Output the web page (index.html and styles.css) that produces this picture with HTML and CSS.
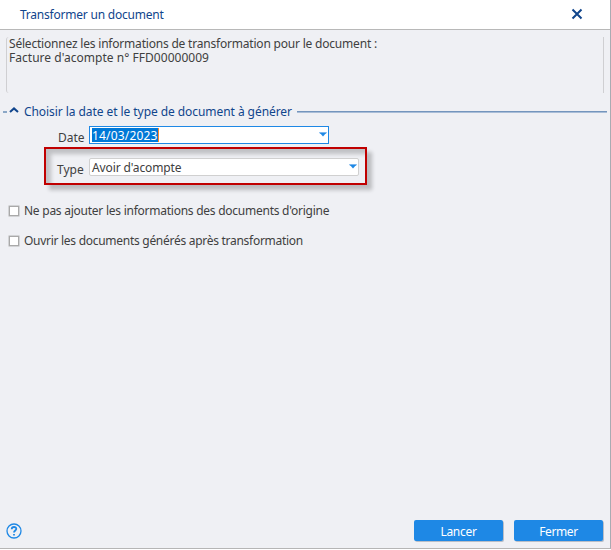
FILE: index.html
```html
<!DOCTYPE html>
<html lang="fr">
<head>
<meta charset="utf-8">
<title>Transformer un document</title>
<link rel="stylesheet" href="styles.css">
</head>
<body>
<div class="window">
  <header class="titlebar">
    <span class="title">Transformer un document</span>
    <svg class="close" width="12" height="12" viewBox="0 0 12 12"><path d="M1.5 1.5l9 9M10.5 1.5l-9 9"/></svg>
  </header>
  <main class="content">
    <div class="intro"><span class="intro-a">Sélectionnez les informations de transformation pour le document :</span><span class="intro-b">Facture d'acompte n° FFD00000009</span></div>
    <div class="section">
      <i class="stub"></i>
      <svg class="chevron" width="10" height="6" viewBox="0 0 10 6"><path d="M1 5l4-3.6L9 5"/></svg>
      <span class="section-title">Choisir la date et le type de document à générer</span>
      <i class="rule"></i>
    </div>
    <div class="row date-row">
      <label>Date</label>
      <div class="field focused"><span class="selected">14/03/2023</span><svg class="arrow" width="8" height="5" viewBox="0 0 8 5"><path class="top" d="M0 0h8L7 2H1z"/><path d="M1 1h6L4 4.5z"/></svg></div>
    </div>
    <div class="row highlight">
      <label>Type</label>
      <div class="field combo"><span class="value">Avoir d'acompte</span><svg class="arrow" width="8" height="5" viewBox="0 0 8 5"><path class="top" d="M0 0h8L7 2H1z"/><path d="M1 1h6L4 4.5z"/></svg></div>
    </div>
    <div class="check first"><i class="box"></i><span class="check-a">Ne pas ajouter les informations des documents d'origine</span></div>
    <div class="check"><i class="box"></i><span class="check-b">Ouvrir les documents générés après transformation</span></div>
  </main>
  <footer class="footer">
    <svg class="help" width="16" height="16" viewBox="0 0 16 16"><circle cx="8" cy="8" r="7"/><path class="mark" d="M5.7 6.2C5.8 3.2 10.4 3.4 10.3 6C10.2 7.5 8 7.6 8 9.6"/><path class="mark" d="M8 11v1.6"/></svg>
    <div class="button"><span class="lbl-a">Lancer</span></div>
    <div class="button"><span class="lbl-b">Fermer</span></div>
  </footer>
</div>
</body>
</html>
```
FILE: styles.css
```css
* { box-sizing: border-box; }
body {
  margin: 0;
  background: #fff;
  font: 12px/14px "Noto Sans", "Open Sans", sans-serif;
  color: #404040;
}
span, label { white-space: nowrap; }
.window {
  display: flex;
  flex-direction: column;
  width: 611px;
  height: 549px;
  background: #eff0f4;
  border-right: 1px solid #a9abb2;
  border-bottom: 1px solid #b5b5b5;
}
.titlebar {
  display: flex;
  align-items: center;
  justify-content: space-between;
  height: 30px;
  padding: 0 27px 0 20px;
  background: #fff;
  border-bottom: 1px solid #b8b8b8;
}
.title, .section-title { color: #10458c; }
.title { padding-top: 1px; letter-spacing: -.22px; }
.close { margin-bottom: 1px; fill: none; stroke: #10458c; stroke-width: 2; }
.content { flex: 1; }
.intro {
  height: 56px;
  margin: 7px 6px 0;
  padding-left: 2px;
  border-left: 1px solid #cfcfd2;
  border-right: 1px solid #cfcfd2;
  border-radius: 3px 0 0 3px;
}
.intro span { display: block; width: max-content; }
.intro-a { letter-spacing: -.2px; }
.intro-b { letter-spacing: .03px; }
.section {
  display: flex;
  align-items: center;
  height: 14px;
  margin-top: 12px;
  padding: 0 3px;
}
.section-title { letter-spacing: -.065px; }
.stub { width: 4px; height: 2px; margin-top: -1px; background: #8ba7c6; }
.chevron { margin: 0 5px 4px 2px; fill: none; stroke: #10458c; stroke-width: 2; }
.rule { flex: 1; height: 2px; margin: -1px 0 0 5px; background: #7495bd; border-bottom: 1px solid #a9bdd7; }
.row { display: flex; align-items: center; }
.row label { padding-top: 6px; }
.date-row { height: 18px; margin-top: 7px; padding-left: 58px; }
.date-row label { width: 31px; }
.field {
  display: flex;
  align-items: center;
  justify-content: space-between;
  height: 18px;
  padding: 0 2px;
  background: #fff;
}
.focused { width: 240px; padding-right: 1px; border: 1px solid #1e88e5; }
.combo { width: 270px; padding-right: 1px; border: 1px solid #d0d0d0; border-radius: 2px; }
.value { padding-top: 2px; letter-spacing: -.12px; }
.selected {
  height: 14px;
  line-height: 15px;
  letter-spacing: .17px;
  background: #0078d7;
  color: #fff;
  border-right: 1px solid #ff8728;
}
.arrow { fill: #1e88e5; margin-bottom: 1px; }
.arrow .top { fill: #79b6ef; }
.highlight {
  width: 323px;
  height: 38px;
  margin: 3px 0 0 44px;
  padding: 1px 0 0 11px;
  border: 2px solid #c00000;
  box-shadow: 5px 5px 4px rgba(0,0,0,.22), inset 5px 5px 4px rgba(0,0,0,.2);
}
.highlight label { width: 32px; }
.check { display: flex; align-items: center; height: 14px; margin: 16px 0 0 9px; gap: 5px; }
.check-a { letter-spacing: -.25px; }
.check-b { letter-spacing: -.28px; }
.first { margin-top: 19px; }
.box { width: 10px; height: 10px; border: 1px solid #a9a9a9; background: #fff; box-shadow: 0 0 0 .5px #b5b5b5; }
.footer { display: flex; height: 28px; padding-left: 6px; }
.help { flex: none; margin: 3px 392px 0 0; fill: none; stroke: #1e88e5; stroke-width: 1.3; }
.mark { stroke-width: 1.8; }
.button {
  display: flex;
  flex: none;
  align-items: center;
  justify-content: center;
  width: 89px;
  height: 21px;
  margin-right: 11px;
  padding-top: 3px;
  border-radius: 2px;
  background: #1e88e5;
  box-shadow: 1px 1px 0 #b9bec7;
  color: #fff;
}
.lbl-a { letter-spacing: -.3px; }
.lbl-b { letter-spacing: -.4px; }
```
